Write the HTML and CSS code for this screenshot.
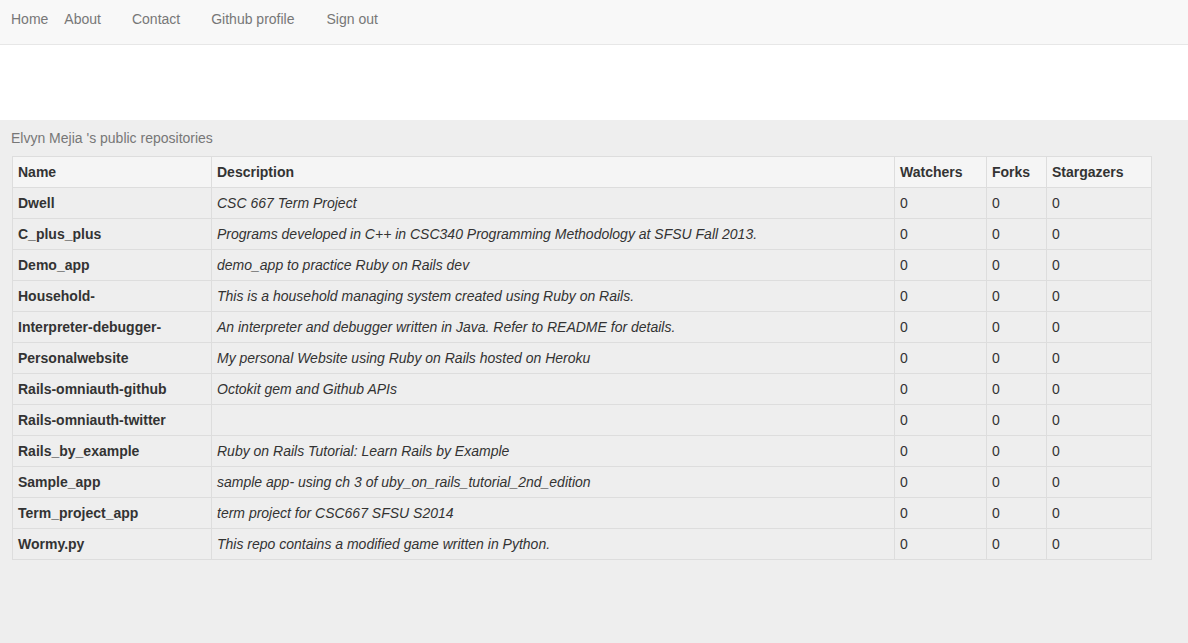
FILE: index.html
```html
<!DOCTYPE html>
<html>
<head>
<meta charset="utf-8">
<link rel="stylesheet" href="styles.css">
</head>
<body>
<nav class="navbar">
  <a class="nav-link home" href="#">Home</a>
  <a class="nav-link about" href="#">About</a>
  <a class="nav-link contact" href="#">Contact</a>
  <a class="nav-link github" href="#">Github profile</a>
  <a class="nav-link" href="#">Sign out</a>
</nav>
<div class="spacer"></div>
<main class="content">
  <p class="title">Elvyn Mejia 's public repositories</p>
  <table class="repos">
    <colgroup>
      <col class="c-name"><col class="c-desc"><col class="c-watch"><col class="c-forks"><col class="c-stars">
    </colgroup>
    <thead>
      <tr><th>Name</th><th>Description</th><th>Watchers</th><th>Forks</th><th>Stargazers</th></tr>
    </thead>
    <tbody>
      <tr><th>Dwell</th><td class="desc">CSC 667 Term Project</td><td>0</td><td>0</td><td>0</td></tr>
      <tr><th>C_plus_plus</th><td class="desc">Programs developed in C++ in CSC340 Programming Methodology at SFSU Fall 2013.</td><td>0</td><td>0</td><td>0</td></tr>
      <tr><th>Demo_app</th><td class="desc">demo_app to practice Ruby on Rails dev</td><td>0</td><td>0</td><td>0</td></tr>
      <tr><th>Household-</th><td class="desc">This is a household managing system created using Ruby on Rails.</td><td>0</td><td>0</td><td>0</td></tr>
      <tr><th>Interpreter-debugger-</th><td class="desc">An interpreter and debugger written in Java. Refer to README for details.</td><td>0</td><td>0</td><td>0</td></tr>
      <tr><th>Personalwebsite</th><td class="desc">My personal Website using Ruby on Rails hosted on Heroku</td><td>0</td><td>0</td><td>0</td></tr>
      <tr><th>Rails-omniauth-github</th><td class="desc">Octokit gem and Github APIs</td><td>0</td><td>0</td><td>0</td></tr>
      <tr><th>Rails-omniauth-twitter</th><td class="desc"></td><td>0</td><td>0</td><td>0</td></tr>
      <tr><th>Rails_by_example</th><td class="desc">Ruby on Rails Tutorial: Learn Rails by Example</td><td>0</td><td>0</td><td>0</td></tr>
      <tr><th>Sample_app</th><td class="desc">sample app- using ch 3 of uby_on_rails_tutorial_2nd_edition</td><td>0</td><td>0</td><td>0</td></tr>
      <tr><th>Term_project_app</th><td class="desc">term project for CSC667 SFSU S2014</td><td>0</td><td>0</td><td>0</td></tr>
      <tr><th>Wormy.py</th><td class="desc">This repo contains a modified game written in Python.</td><td>0</td><td>0</td><td>0</td></tr>
    </tbody>
  </table>
</main>
</body>
</html>
```

FILE: styles.css
```css
html, body {
  margin: 0;
  padding: 0;
}
body {
  font-family: "Liberation Sans", Arial, sans-serif;
  font-size: 14px;
  line-height: 20px;
  color: #333;
  background: #eeeeee;
  min-height: 643px;
}
.navbar {
  display: flex;
  align-items: center;
  height: 44px;
  background: #f8f8f8;
  border-bottom: 1px solid #e7e7e7;
  padding-left: 11px;
  box-sizing: content-box;
}
.nav-link {
  color: #777;
  text-decoration: none;
  margin-right: 29px;
  position: relative;
  top: -3px;
}
.nav-link.home {
  margin-right: 16px;
}
.nav-link.about {
  margin-right: 31px;
}
.nav-link.contact {
  margin-right: 31px;
}
.nav-link.github {
  margin-right: 32px;
}
.spacer {
  height: 75px;
  background: #fff;
}
.content {
  padding: 8px 12px 0 11px;
}
.title {
  margin: 0 0 8px 0;
  color: #777;
  line-height: 20px;
}
.repos {
  margin-left: 1px;
  border-collapse: collapse;
  table-layout: fixed;
  width: 1139px;
  background: #eeeeee;
}
.c-name { width: 199px; }
.c-desc { width: 683px; }
.c-watch { width: 92px; }
.c-forks { width: 60px; }
.c-stars { width: 105px; }
.repos th, .repos td {
  border: 1px solid #dddddd;
  padding: 5px;
  text-align: left;
  vertical-align: top;
  line-height: 20px;
  height: 20px;
  white-space: nowrap;
}
.repos th {
  font-weight: bold;
}
.repos thead th {
  background: #f5f5f5;
}
.repos td.desc {
  font-style: italic;
}
```
